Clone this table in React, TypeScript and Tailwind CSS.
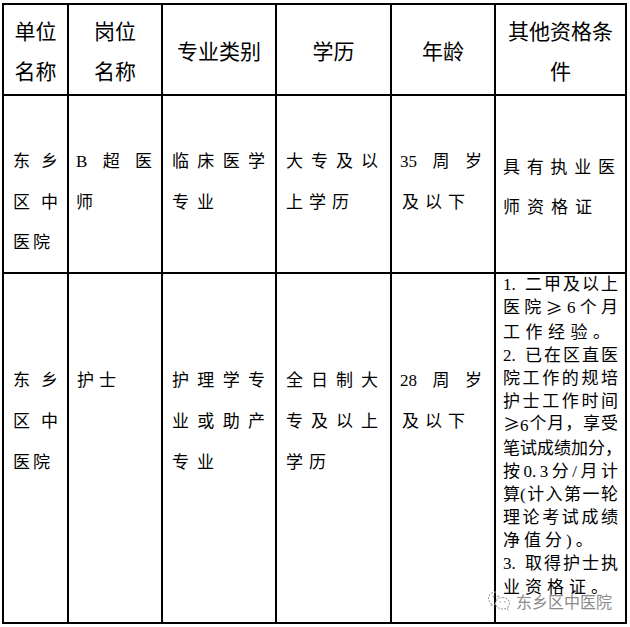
import React, { type ReactNode } from "react";

const BODY = "font-['Liberation_Serif','Noto_Sans_CJK_SC',serif] text-[17px] text-black";
const HEAD = "font-['Noto_Sans_CJK_SC','Liberation_Sans',sans-serif] text-[21px] leading-[40px] text-black";

// one justified line: tokens spread across the cell width
function J({ t }: { t: string | ReactNode[] }) {
  const parts = typeof t === "string" ? Array.from(t) : t;
  return (
    <div className="flex justify-between">
      {parts.map((c, i) => (
        <span key={i}>{c}</span>
      ))}
    </div>
  );
}

// list number such as "1." keeps a wider box, like a full-width stop
const Num = ({ n }: { n: string }) => <span className="inline-block w-[20px]">{n}</span>;
// full-width comparison sign
const Ge = () => <span className="font-['Noto_Sans_CJK_SC',sans-serif]">≥</span>;

function HeadCell({ lines }: { lines: string[] }) {
  return (
    <div className={`bg-white flex flex-col items-center justify-center text-center ${HEAD}`}>
      {lines.map((l, i) => (
        <div key={i}>{l}</div>
      ))}
    </div>
  );
}

function WeChatMark() {
  return (
    <div className="absolute left-[487px] top-[591px] flex items-center gap-[5px]">
      <svg width="24" height="20" viewBox="0 1 24 20" fill="none">
        <path
          d="M9 2C4.8 2 1.5 4.8 1.5 8.3c0 2 1.1 3.7 2.8 4.9l-.7 2.3 2.7-1.4c.9.3 1.8.4 2.7.4"
          stroke="#a3a3a3"
          strokeWidth="1.1"
          strokeDasharray="2 1.2"
        />
        <path
          d="M15.5 7.5c3.9 0 7 2.6 7 5.8 0 1.8-.9 3.3-2.4 4.4l.6 2-2.3-1.2c-.9.3-1.9.5-2.9.5-3.9 0-7-2.6-7-5.8s3.1-5.7 7-5.7z"
          stroke="#a3a3a3"
          strokeWidth="1.1"
          strokeDasharray="2 1.2"
        />
        <circle cx="6.5" cy="6.5" r="0.9" fill="#a3a3a3" />
        <circle cx="11" cy="6.2" r="0.9" fill="#a3a3a3" />
        <circle cx="13.2" cy="12" r="0.8" fill="#a3a3a3" />
        <circle cx="17.8" cy="12" r="0.8" fill="#a3a3a3" />
      </svg>
      <span className="font-['Noto_Sans_CJK_SC',sans-serif] text-[16px] leading-[14px] text-[#8c8c8c]">
        东乡区中医院
      </span>
    </div>
  );
}

export default function App() {
  return (
    <div className="relative w-[630px] h-[627px] bg-white overflow-hidden">
      <div className="ml-[2px] mt-[3px] w-fit grid grid-cols-[63px_92px_112px_113px_102px_129px] grid-rows-[89px_176px_348px] gap-[2px] p-[2px] bg-black">
        {/* header */}
        <HeadCell lines={["单位", "名称"]} />
        <HeadCell lines={["岗位", "名称"]} />
        <HeadCell lines={["专业类别"]} />
        <HeadCell lines={["学历"]} />
        <HeadCell lines={["年龄"]} />
        <HeadCell lines={["其他资格条", "件"]} />

        {/* row 1 */}
        <div className={`bg-white pt-[46px] pl-[9px] pr-[9px] leading-[40.5px] ${BODY}`}>
          <J t="东乡" />
          <J t="区中" />
          <div className="tracking-[3px]">医院</div>
        </div>
        <div className={`bg-white pt-[46px] pl-[7px] pr-[9px] leading-[40.5px] ${BODY}`}>
          <J t={["B", "超", "医"]} />
          <div>师</div>
        </div>
        <div className={`bg-white pt-[46px] pl-[9px] pr-[10px] leading-[40.5px] ${BODY}`}>
          <J t="临床医学" />
          <div className="tracking-[8px]">专业</div>
        </div>
        <div className={`bg-white pt-[46px] pl-[9px] pr-[12px] leading-[40.5px] ${BODY}`}>
          <J t="大专及以" />
          <div className="tracking-[6px]">上学历</div>
        </div>
        <div className={`bg-white pt-[46px] pl-[8px] pr-[12px] leading-[40.5px] ${BODY}`}>
          <J t={["35", "周", "岁"]} />
          <div className="pl-[2px] tracking-[6px]">及以下</div>
        </div>
        <div className={`bg-white pt-[52px] pl-[7px] pr-[10px] leading-[40px] ${BODY}`}>
          <J t="具有执业医" />
          <div className="tracking-[7px]">师资格证</div>
        </div>

        {/* row 2 */}
        <div className={`bg-white pt-[86px] pl-[9px] pr-[9px] leading-[41px] ${BODY}`}>
          <J t="东乡" />
          <J t="区中" />
          <div className="tracking-[3px]">医院</div>
        </div>
        <div className={`bg-white pt-[86px] pl-[8px] pr-[9px] leading-[41px] ${BODY}`}>
          <div className="tracking-[5px]">护士</div>
        </div>
        <div className={`bg-white pt-[86px] pl-[9px] pr-[10px] leading-[41px] ${BODY}`}>
          <J t="护理学专" />
          <J t="业或助产" />
          <div className="tracking-[8px]">专业</div>
        </div>
        <div className={`bg-white pt-[86px] pl-[9px] pr-[12px] leading-[41px] ${BODY}`}>
          <J t="全日制大" />
          <J t="专及以上" />
          <div className="tracking-[6px]">学历</div>
        </div>
        <div className={`bg-white pt-[86px] pl-[8px] pr-[12px] leading-[41px] ${BODY}`}>
          <J t={["28", "周", "岁"]} />
          <div className="pl-[2px] tracking-[6px]">及以下</div>
        </div>
        <div className={`bg-white pt-0 pl-[7px] pr-[7px] leading-[22.9px] ${BODY} text-[15px]`}>
          <J t={[<Num n="1." />, "二", "甲", "及", "以", "上"]} />
          <J t={["医", "院", <Ge />, "6", "个", "月"]} />
          <div className="tracking-[5.5px]">工作经验。</div>
          <J t={[<Num n="2." />, "已", "在", "区", "直", "医"]} />
          <J t="院工作的规培" />
          <J t="护士工作时间" />
          <J t={[<><Ge />6</>, "个", "月", "，", "享", "受"]} />
          <J t="笔试成绩加分，" />
          <J t={["按", "0.", "3", "分", "/", "月", "计"]} />
          <J t={["算(", "计", "入", "第", "一", "轮"]} />
          <J t="理论考试成绩" />
          <div className="tracking-[4px]">净值分)。</div>
          <J t={[<Num n="3." />, "取", "得", "护", "士", "执"]} />
          <div className="pt-[5px] leading-[14px] tracking-[5px]">业资格证。</div>
        </div>
      </div>
      <WeChatMark />
    </div>
  );
}
